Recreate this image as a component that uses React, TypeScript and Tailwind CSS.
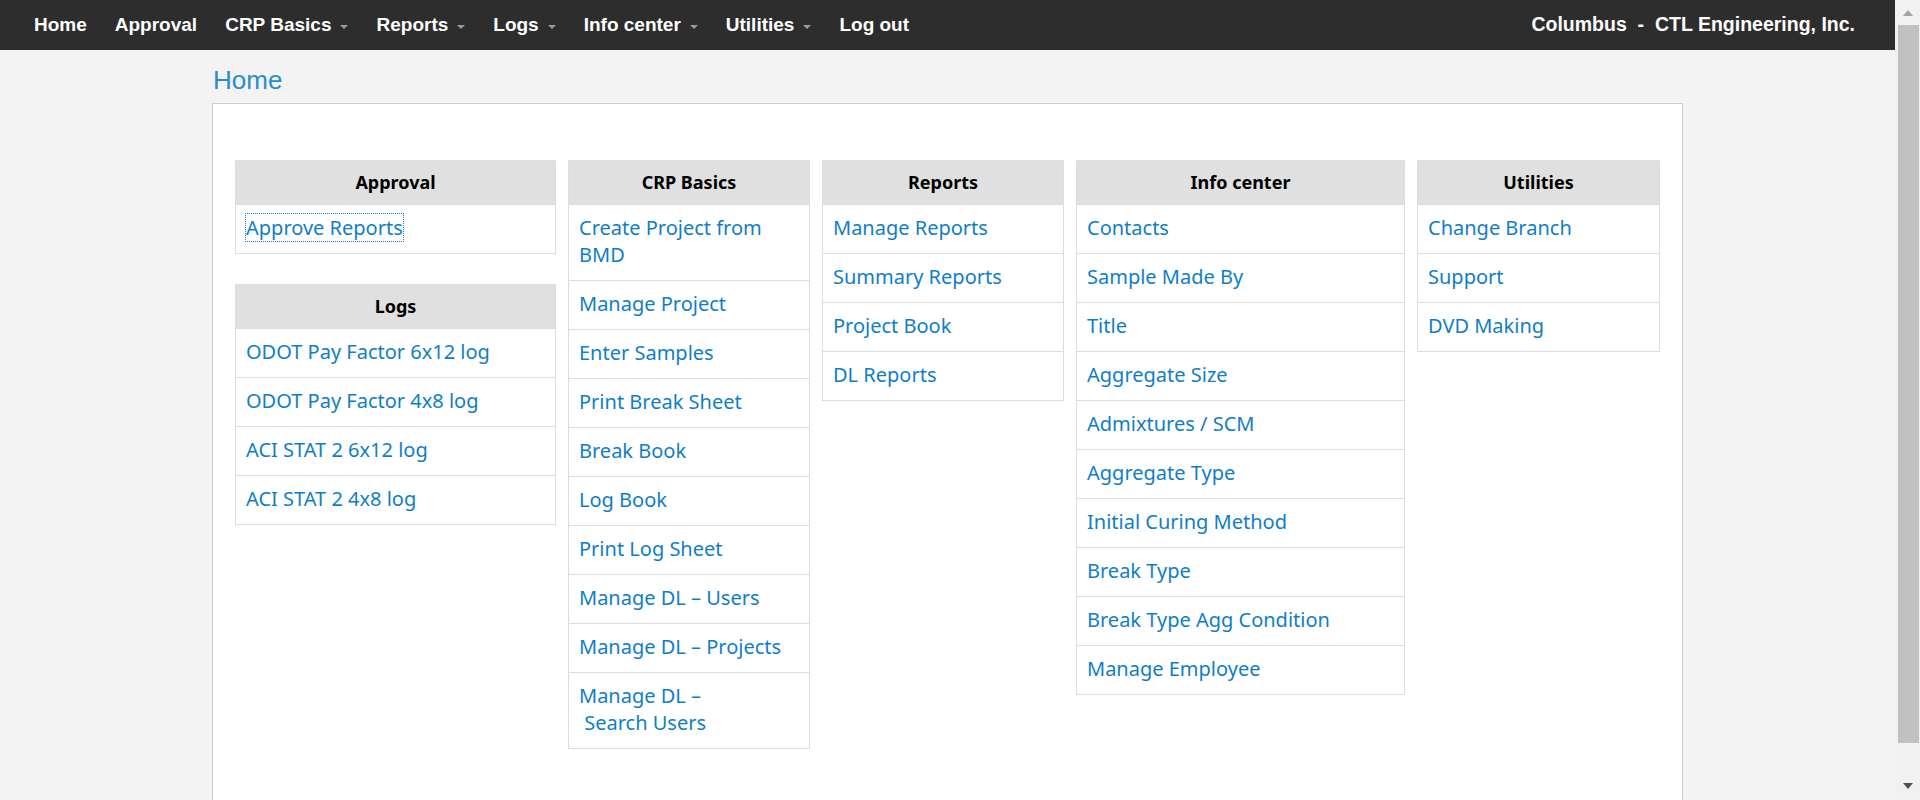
import React from 'react'

type Item = { label: React.ReactNode; focused?: boolean }
type Panel = { title: string; items: Item[] }

const NAV_ITEMS: { label: string; caret?: boolean }[] = [
  { label: 'Home' },
  { label: 'Approval' },
  { label: 'CRP Basics', caret: true },
  { label: 'Reports', caret: true },
  { label: 'Logs', caret: true },
  { label: 'Info center', caret: true },
  { label: 'Utilities', caret: true },
  { label: 'Log out' },
]

const approval: Panel = { title: 'Approval', items: [{ label: 'Approve Reports', focused: true }] }

const logs: Panel = {
  title: 'Logs',
  items: [
    { label: 'ODOT Pay Factor 6x12 log' },
    { label: 'ODOT Pay Factor 4x8 log' },
    { label: 'ACI STAT 2 6x12 log' },
    { label: 'ACI STAT 2 4x8 log' },
  ],
}

const crpBasics: Panel = {
  title: 'CRP Basics',
  items: [
    { label: 'Create Project from BMD' },
    { label: 'Manage Project' },
    { label: 'Enter Samples' },
    { label: 'Print Break Sheet' },
    { label: 'Break Book' },
    { label: 'Log Book' },
    { label: 'Print Log Sheet' },
    { label: 'Manage DL – Users' },
    { label: 'Manage DL – Projects' },
    {
      label: (
        <>
          Manage DL –<br />
          {'\u00a0Search Users'}
        </>
      ),
    },
  ],
}

const reports: Panel = {
  title: 'Reports',
  items: [
    { label: 'Manage Reports' },
    { label: 'Summary Reports' },
    { label: 'Project Book' },
    { label: 'DL Reports' },
  ],
}

const infoCenter: Panel = {
  title: 'Info center',
  items: [
    { label: 'Contacts' },
    { label: 'Sample Made By' },
    { label: 'Title' },
    { label: 'Aggregate Size' },
    { label: 'Admixtures / SCM' },
    { label: 'Aggregate Type' },
    { label: 'Initial Curing Method' },
    { label: 'Break Type' },
    { label: 'Break Type Agg Condition' },
    { label: 'Manage Employee' },
  ],
}

const utilities: Panel = {
  title: 'Utilities',
  items: [{ label: 'Change Branch' }, { label: 'Support' }, { label: 'DVD Making' }],
}

function MenuPanel({ panel }: { panel: Panel }) {
  return (
    <div className="border border-[#dddddd] bg-white">
      <div className="h-[43px] bg-[#e0e0e0] flex items-center justify-center text-[18px] font-bold text-black">
        {panel.title}
      </div>
      {panel.items.map((item, i) => (
        <div key={i} className="border-t border-[#dddddd] px-[10px] pt-[8.5px] pb-[12.5px] text-[20px] leading-[27px] text-[#0f7ec8]">
          <span className={item.focused ? 'outline outline-1 outline-dotted outline-[#0f7ec8]' : ''}>{item.label}</span>
        </div>
      ))}
    </div>
  )
}

function Scrollbar() {
  return (
    <div className="w-[25px] h-[800px] bg-[#f1f1f1] flex flex-col items-center">
      <div className="h-[25px] flex items-center justify-center">
        <div className="w-0 h-0 border-x-[5px] border-x-transparent border-b-[6px] border-b-[#a3a3a3]" />
      </div>
      <div className="w-[21px] h-[718px] bg-[#c1c1c1] ml-[2px]" />
      <div className="flex-1" />
      <div className="h-[25px] flex items-center justify-center pb-[4px]">
        <div className="w-0 h-0 border-x-[5px] border-x-transparent border-t-[6px] border-t-[#505050]" />
      </div>
    </div>
  )
}

export default function App() {
  return (
    <div className="h-[800px] w-[1920px] overflow-hidden flex bg-[#f3f3f3]">
      <div className="flex-1 flex flex-col min-w-0">
        {/* Top nav */}
        <div className="h-[50px] bg-[#2d2d2d] flex items-center justify-between pl-[20px] pr-[40px] font-['Liberation_Sans',Arial,sans-serif] font-bold text-[19px] text-white">
          <div className="flex items-center">
            {NAV_ITEMS.map((n) => (
              <div key={n.label} className="px-[14px] flex items-center">
                <span>{n.label}</span>
                {n.caret && (
                  <span className="ml-[9px] mt-[3px] w-0 h-0 border-x-[4px] border-x-transparent border-t-[4px] border-t-[#9a9a9a]" />
                )}
              </div>
            ))}
          </div>
          <div className="whitespace-pre text-[19.5px]">Columbus  -  CTL Engineering, Inc.</div>
        </div>

        <div className="w-[1471px] mx-auto flex-1 flex flex-col">
          <h1 className="mt-[15px] mb-[8px] pl-[1px] text-[26px] leading-[30px] text-[#2a8dcb] font-['Liberation_Sans',Arial,sans-serif] font-normal">
            Home
          </h1>

          <div className="flex-1 bg-white border-x border-t border-[#cccccc] pt-[56px] px-[22px] font-['Noto_Sans',sans-serif]">
            <div className="flex items-start gap-[12px]">
              <div className="w-[321px] flex flex-col gap-[30px]">
                <MenuPanel panel={approval} />
                <MenuPanel panel={logs} />
              </div>
              <div className="w-[242px]">
                <MenuPanel panel={crpBasics} />
              </div>
              <div className="w-[242px]">
                <MenuPanel panel={reports} />
              </div>
              <div className="w-[329px]">
                <MenuPanel panel={infoCenter} />
              </div>
              <div className="w-[243px]">
                <MenuPanel panel={utilities} />
              </div>
            </div>
          </div>
        </div>
      </div>
      <Scrollbar />
    </div>
  )
}
